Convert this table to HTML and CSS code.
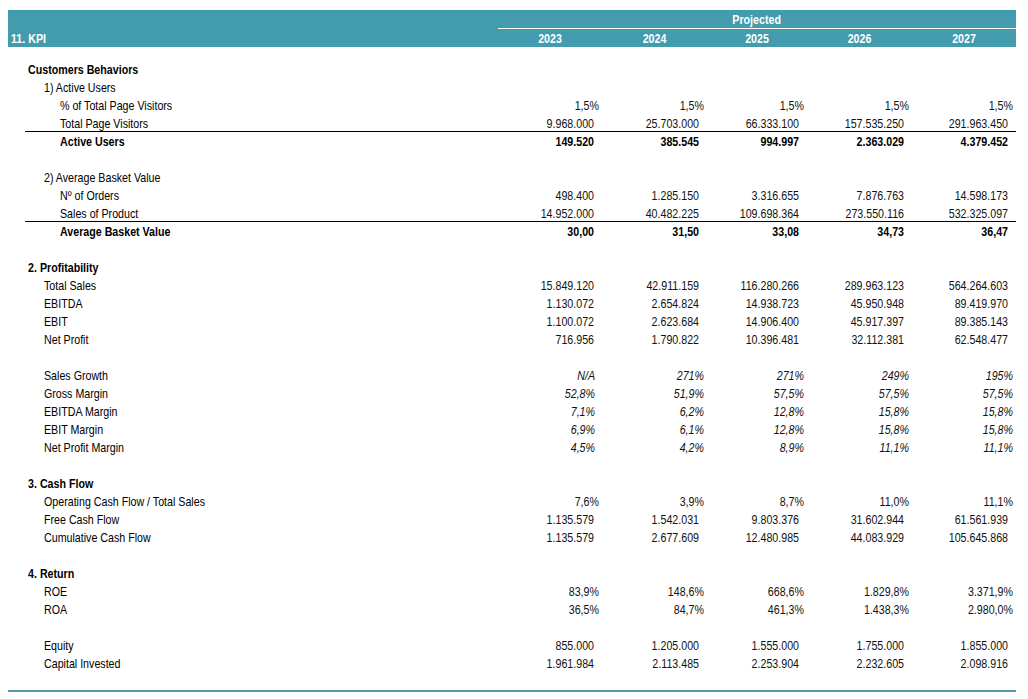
FILE: index.html
```html
<!DOCTYPE html>
<html lang="en">
<head>
<meta charset="utf-8">
<title>11. KPI</title>
<link rel="stylesheet" href="styles.css">
</head>
<body>
<div class="sheet">
  <div class="band">
    <div class="band-row top">
      <div class="band-label"></div>
      <div class="projected"><span class="txt">Projected</span></div>
    </div>
    <div class="band-row">
      <div class="band-label">11. KPI</div>
      <div class="year">2023</div>
      <div class="year">2024</div>
      <div class="year">2025</div>
      <div class="year">2026</div>
      <div class="year">2027</div>
    </div>
  </div>

  <div class="table">
    <div class="row"><div class="label l0 b">Customers Behaviors</div></div>
    <div class="row"><div class="label l1">1) Active Users</div></div>
    <div class="row pct"><div class="label l2">% of Total Page Visitors</div><div class="v">1,5%</div><div class="v">1,5%</div><div class="v">1,5%</div><div class="v">1,5%</div><div class="v">1,5%</div></div>
    <div class="row rule"><div class="label l2">Total Page Visitors</div><div class="v">9.968.000</div><div class="v">25.703.000</div><div class="v">66.333.100</div><div class="v">157.535.250</div><div class="v">291.963.450</div></div>
    <div class="row b"><div class="label l2">Active Users</div><div class="v">149.520</div><div class="v">385.545</div><div class="v">994.997</div><div class="v">2.363.029</div><div class="v">4.379.452</div></div>
    <div class="row"></div>

    <div class="row"><div class="label l1">2) Average Basket Value</div></div>
    <div class="row"><div class="label l2">Nº of Orders</div><div class="v">498.400</div><div class="v">1.285.150</div><div class="v">3.316.655</div><div class="v">7.876.763</div><div class="v">14.598.173</div></div>
    <div class="row rule"><div class="label l2">Sales of Product</div><div class="v">14.952.000</div><div class="v">40.482.225</div><div class="v">109.698.364</div><div class="v">273.550.116</div><div class="v">532.325.097</div></div>
    <div class="row b"><div class="label l2">Average Basket Value</div><div class="v">30,00</div><div class="v">31,50</div><div class="v">33,08</div><div class="v">34,73</div><div class="v">36,47</div></div>
    <div class="row"></div>

    <div class="row"><div class="label l0 b">2. Profitability</div></div>
    <div class="row"><div class="label l1">Total Sales</div><div class="v">15.849.120</div><div class="v">42.911.159</div><div class="v">116.280.266</div><div class="v">289.963.123</div><div class="v">564.264.603</div></div>
    <div class="row"><div class="label l1">EBITDA</div><div class="v">1.130.072</div><div class="v">2.654.824</div><div class="v">14.938.723</div><div class="v">45.950.948</div><div class="v">89.419.970</div></div>
    <div class="row"><div class="label l1">EBIT</div><div class="v">1.100.072</div><div class="v">2.623.684</div><div class="v">14.906.400</div><div class="v">45.917.397</div><div class="v">89.385.143</div></div>
    <div class="row"><div class="label l1">Net Profit</div><div class="v">716.956</div><div class="v">1.790.822</div><div class="v">10.396.481</div><div class="v">32.112.381</div><div class="v">62.548.477</div></div>
    <div class="row"></div>

    <div class="row pct it"><div class="label l1">Sales Growth</div><div class="v first">N/A</div><div class="v">271%</div><div class="v">271%</div><div class="v">249%</div><div class="v">195%</div></div>
    <div class="row pct it"><div class="label l1">Gross Margin</div><div class="v first">52,8%</div><div class="v">51,9%</div><div class="v">57,5%</div><div class="v">57,5%</div><div class="v">57,5%</div></div>
    <div class="row pct it"><div class="label l1">EBITDA Margin</div><div class="v first">7,1%</div><div class="v">6,2%</div><div class="v">12,8%</div><div class="v">15,8%</div><div class="v">15,8%</div></div>
    <div class="row pct it"><div class="label l1">EBIT Margin</div><div class="v first">6,9%</div><div class="v">6,1%</div><div class="v">12,8%</div><div class="v">15,8%</div><div class="v">15,8%</div></div>
    <div class="row pct it"><div class="label l1">Net Profit Margin</div><div class="v first">4,5%</div><div class="v">4,2%</div><div class="v">8,9%</div><div class="v">11,1%</div><div class="v">11,1%</div></div>
    <div class="row"></div>

    <div class="row"><div class="label l0 b">3. Cash Flow</div></div>
    <div class="row pct"><div class="label l1">Operating Cash Flow / Total Sales</div><div class="v">7,6%</div><div class="v">3,9%</div><div class="v">8,7%</div><div class="v">11,0%</div><div class="v">11,1%</div></div>
    <div class="row"><div class="label l1">Free Cash Flow</div><div class="v">1.135.579</div><div class="v">1.542.031</div><div class="v">9.803.376</div><div class="v">31.602.944</div><div class="v">61.561.939</div></div>
    <div class="row"><div class="label l1">Cumulative Cash Flow</div><div class="v">1.135.579</div><div class="v">2.677.609</div><div class="v">12.480.985</div><div class="v">44.083.929</div><div class="v">105.645.868</div></div>
    <div class="row"></div>

    <div class="row"><div class="label l0 b">4. Return</div></div>
    <div class="row pct"><div class="label l1">ROE</div><div class="v">83,9%</div><div class="v">148,6%</div><div class="v">668,6%</div><div class="v">1.829,8%</div><div class="v">3.371,9%</div></div>
    <div class="row pct"><div class="label l1">ROA</div><div class="v">36,5%</div><div class="v">84,7%</div><div class="v">461,3%</div><div class="v">1.438,3%</div><div class="v">2.980,0%</div></div>
    <div class="row"></div>

    <div class="row"><div class="label l1">Equity</div><div class="v">855.000</div><div class="v">1.205.000</div><div class="v">1.555.000</div><div class="v">1.755.000</div><div class="v">1.855.000</div></div>
    <div class="row"><div class="label l1">Capital Invested</div><div class="v">1.961.984</div><div class="v">2.113.485</div><div class="v">2.253.904</div><div class="v">2.232.605</div><div class="v">2.098.916</div></div>
    <div class="row"></div>
  </div>

  <div class="bottom-rule"></div>
</div>
</body>
</html>
```
FILE: styles.css
```css
html, body {
  margin: 0;
  padding: 0;
  background: #ffffff;
}

body {
  font-family: "Liberation Sans", Arial, sans-serif;
  font-size: 13px;
  color: #000000;
}

.sheet {
  width: 1008px;
  margin-left: 8px;
  padding-top: 10px;
}

/* The reference uses a narrow Arial; Liberation Sans is compressed horizontally to match */
.label,
.v,
.year,
.band-label,
.projected .txt {
  transform: scaleX(0.82);
}

.label,
.band-label {
  transform-origin: left center;
}

.v {
  transform-origin: right center;
}

.year {
  transform-origin: center center;
}

.band {
  background: #429cad;
  color: #ffffff;
  font-weight: bold;
}

.band-row {
  display: grid;
  grid-template-columns: 490px 104px 105px 100px 105px 104px;
  height: 18px;
  line-height: 18px;
  padding-top: 1px;
  box-sizing: border-box;
}

.band-row.top {
  height: 19px;
  padding-top: 0;
}

.projected {
  grid-column: 2 / 7;
  text-align: center;
  border-bottom: 1px solid #ffffff;
  padding-top: 1px;
  line-height: 17px;
}

.projected .txt {
  display: inline-block;
  transform-origin: center center;
}

.band-label {
  padding-left: 3.7px;
}

.year {
  text-align: center;
}

.table {
  margin-top: 13px;
}

.row {
  display: grid;
  grid-template-columns: 473px 104px 105px 100px 105px 104px;
  margin-left: 17px;
  height: 18px;
  line-height: 18px;
  padding-top: 1px;
  box-sizing: border-box;
  white-space: nowrap;
}

.row.rule {
  border-bottom: 1px solid #000000;
}

.label.l0 { padding-left: 3.7px; }
.label.l1 { padding-left: 23.2px; }
.label.l2 { padding-left: 42.7px; }

.b { font-weight: bold; }

.v {
  text-align: right;
  padding-right: 9.75px;
  color: #111111;
}

.row.b .v { color: #000000; }

.row.pct .v { padding-right: 3.7px; }

.row.it .v { font-style: italic; }

.row.it .v.first { padding-right: 8.5px; }

.bottom-rule {
  height: 2px;
  background: #4e9ba6;
}
```
